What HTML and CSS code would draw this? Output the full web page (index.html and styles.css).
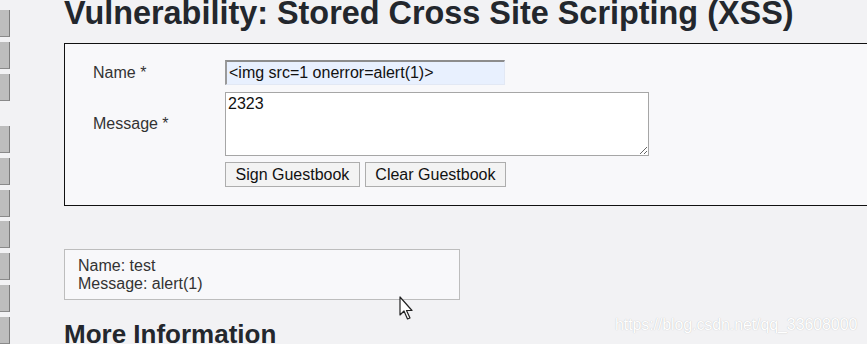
FILE: index.html
```html
<!DOCTYPE html>
<html lang="en">
<head>
    <meta charset="UTF-8">
    <title>Vulnerability: Stored Cross Site Scripting (XSS)</title>
    <link rel="stylesheet" href="styles.css">
</head>
<body>

<div class="side-menu">
    <div class="menu-group">
        <span class="menu-item"></span>
        <span class="menu-item"></span>
        <span class="menu-item"></span>
    </div>
    <div class="menu-group second">
        <span class="menu-item"></span>
        <span class="menu-item"></span>
        <span class="menu-item"></span>
        <span class="menu-item"></span>
        <span class="menu-item"></span>
        <span class="menu-item"></span>
        <span class="menu-item"></span>
    </div>
</div>

<div class="main">
    <h1>Vulnerability: Stored Cross Site Scripting (XSS)</h1>

    <div class="vulnerable-code">
        <form class="guestbook" onsubmit="return false">
            <label for="txtName" class="row-name">Name *</label>
            <input type="text" id="txtName" class="name-input row-name" value="<img src=1 onerror=alert(1)>">

            <label for="mtxMessage" class="row-message">Message *</label>
            <textarea id="mtxMessage" class="message-input row-message">2323</textarea>

            <div class="buttons">
                <button type="button">Sign Guestbook</button>
                <button type="button">Clear Guestbook</button>
            </div>
        </form>
    </div>

    <div class="entry">
        Name: test<br>
        Message: alert(1)
    </div>

    <h2>More Information</h2>
</div>

<!-- mouse pointer -->
<svg class="cursor" width="17" height="25" viewBox="0 0 17 25">
    <path d="M1 1 L1 19 L5 15 L8.5 23 L11 22 L7.5 14.5 L13 14.5 Z" fill="#fff" stroke="#222" stroke-width="1.2" stroke-linejoin="round"/>
</svg>

<div class="watermark">https://blog.csdn.net/qq_33608000</div>

</body>
</html>
```

FILE: styles.css
```css
body {
    margin: 0;
    padding: 0;
    background-color: #f2f2f4;
    font-family: "Liberation Sans", Arial, sans-serif;
    color: #333;
    display: flex;
    overflow: hidden;
    height: 344px;
}

.side-menu {
    width: 10px;
    flex-shrink: 0;
    padding-top: 10px;
}

.menu-group {
    display: flex;
    flex-direction: column;
    gap: 4.8px;
}

.menu-group.second {
    margin-top: 25.4px;
}

.menu-item {
    display: block;
    height: 26px;
    background-color: #bdbdbd;
    border-right: 1px solid #7c7c7c;
    border-bottom: 1px solid #8a8a8a;
}

.main {
    padding-left: 54px;
    width: 900px;
    flex-shrink: 0;
}

h1 {
    margin: 0 0 17px 0;
    font-size: 32.4px;
    line-height: 26px;
    font-weight: bold;
    color: #23272d;
}

.vulnerable-code {
    border: 1px solid #111;
    background-color: #f8f8fa;
    padding: 16px 0 0 28px;
    box-sizing: border-box;
    height: 163px;
}

.guestbook {
    display: grid;
    grid-template-columns: 132px auto;
    align-items: center;
    justify-items: start;
}

.guestbook label {
    font-size: 16px;
    color: #333;
}

.row-name {
    margin-bottom: 7px;
}

.row-message {
    margin-bottom: 6px;
}

.name-input {
    width: 280px;
    height: 25px;
    box-sizing: border-box;
    padding: 0 2px;
    font-family: "Liberation Sans", Arial, sans-serif;
    font-size: 16px;
    color: #111;
    background-color: #e8f0fe;
    border-style: solid;
    border-width: 2px 1px 1px 2px;
    border-color: #8c8c8c #e2e8f4 #e2e8f4 #9a9a9a;
}

.message-input {
    width: 424px;
    height: 64px;
    box-sizing: border-box;
    padding: 2px;
    font-family: "Liberation Sans", Arial, sans-serif;
    font-size: 16px;
    color: #111;
    background-color: #fff;
    border: 1px solid #a6a6a6;
}

.buttons {
    grid-column: 2;
    display: flex;
    gap: 5px;
}

.buttons button {
    height: 25px;
    padding: 0 9.5px;
    font-family: "Liberation Sans", Arial, sans-serif;
    font-size: 16px;
    color: #111;
    background-color: #f3f3f3;
    border: 1px solid #adadad;
    border-radius: 0;
}

.entry {
    margin-top: 43px;
    width: 396px;
    height: 51px;
    box-sizing: border-box;
    padding: 7px 12px 0 13px;
    font-size: 16px;
    color: #333;
    background-color: #f8f8fa;
    border: 1px solid #bdbdbd;
}

h2 {
    margin: 18.7px 0 0 0;
    font-size: 26px;
    font-weight: bold;
    color: #23272d;
}

.cursor {
    position: absolute;
    left: 399px;
    top: 296px;
}

.watermark {
    position: absolute;
    left: 615px;
    top: 316px;
    font-size: 16px;
    color: #fff;
    text-shadow: 0 0 1px rgba(0, 0, 0, 0.25);
    letter-spacing: -0.1px;
}
```
